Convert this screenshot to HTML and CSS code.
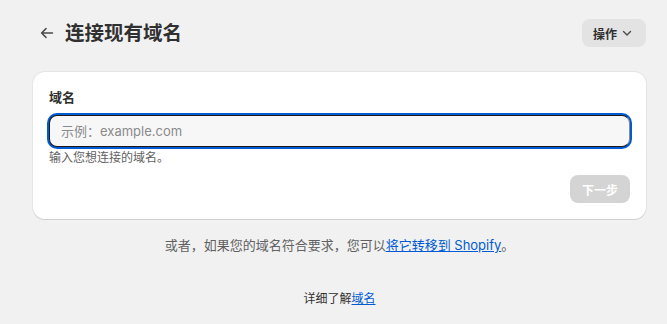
FILE: index.html
```html
<!DOCTYPE html>
<html lang="zh">
<head>
<meta charset="utf-8">
<link rel="stylesheet" href="styles.css">
</head>
<body>
<div class="page">
  <div class="header">
    <div class="title-wrap">
      <span class="back">
        <svg width="20" height="20" viewBox="0 0 20 20"><path d="M15.5 10H4.8M9 5.6L4.6 10L9 14.4" fill="none" stroke="#4a4a4a" stroke-width="1.5" stroke-linecap="round" stroke-linejoin="round"/></svg>
      </span>
      <h1 class="title">连接现有域名</h1>
    </div>
    <button class="action">操作
      <svg width="14" height="14" viewBox="0 0 14 14"><path d="M3.5 5.5L7 9L10.5 5.5" fill="none" stroke="#4a4a4a" stroke-width="1.4" stroke-linecap="round" stroke-linejoin="round"/></svg>
    </button>
  </div>
  <div class="card">
    <label class="label">域名</label>
    <div class="input">示例：example.com</div>
    <div class="help">输入您想连接的域名。</div>
    <div class="actions"><button class="next">下一步</button></div>
  </div>
  <p class="note">或者，如果您的域名符合要求，您可以<a class="link">将它转移到 Shopify</a>。</p>
  <p class="more">详细了解<a class="link">域名</a></p>
</div>
</body>
</html>
```
FILE: styles.css
```css
* { box-sizing: border-box; }
html, body { margin: 0; background: #f1f1f1; }
body { font-family: Inter, "Noto Sans CJK SC", sans-serif; color: #303030; }
.page { padding: 19px 21px 0 33px; }
.header { display: flex; justify-content: space-between; align-items: center; height: 28px; }
.title-wrap { display: flex; align-items: center; gap: 8px; padding-left: 4px; }
.back { display: flex; width: 20px; height: 20px; }
.title { margin: 0; font-size: 19.5px; font-weight: 700; line-height: 28px; color: #303030; }
.action { display: flex; align-items: center; gap: 3px; height: 28px; width: 64px; padding: 0 0 0 11px; border: none; border-radius: 8px; background: #e3e3e3; font-family: inherit; font-size: 12px; font-weight: 700; color: #303030; }
.card { margin-top: 25px; background: #fff; border-radius: 12px; padding: 16px; box-shadow: 0 1px 0 0 rgba(26,26,26,0.1), 0 0 0 1px rgba(26,26,26,0.05); }
.label { display: block; font-size: 13px; font-weight: 600; line-height: 20px; margin-top: -1px; }
.input { margin-top: 8px; height: 32px; border: 1px solid #1a1a1a; border-right-color: #8a8a8a; border-radius: 8px; background: #f7f7f7; box-shadow: 0 0 0 2px #005bd3; padding: 0 11px; font-size: 13px; line-height: 30px; color: #8a8a8a; }
.help { margin-top: 3px; font-size: 12px; line-height: 16px; color: #616161; }
.actions { display: flex; justify-content: flex-end; margin-top: 9px; }
.next { width: 60px; height: 28px; border: none; border-radius: 8px; background: #d4d4d4; color: #fff; font-family: inherit; font-size: 12px; font-weight: 700; padding: 0; }
.note { margin: 16px 0 0; text-align: center; font-size: 13px; line-height: 20px; color: #616161; }
.more { margin: 34px 0 0; text-align: center; font-size: 12px; line-height: 20px; color: #303030; }
.link { color: #005bd3; text-decoration: underline; }
```
